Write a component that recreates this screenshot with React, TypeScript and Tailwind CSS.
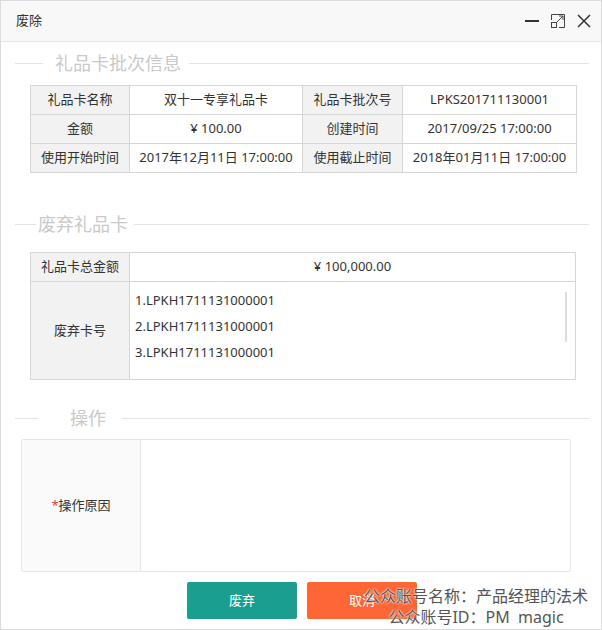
import React from 'react';

const font = { fontFamily: '"Noto Sans", "Noto Sans CJK SC", sans-serif' };

const Legend = ({ title, lead, gap, after }: { title: string; lead: number; gap: string; after: string }) => (
  <div className="flex items-center pl-[14px] pr-[12px] h-[22px]">
    <div className="h-px bg-[#e3e3e3]" style={{ width: lead }} />
    <span className={`${gap} ${after} text-[18px] leading-none text-[#c9c9c9]`}>{title}</span>
    <div className="h-px flex-1 bg-[#e3e3e3]" />
  </div>
);

const App = () => {
  return (
    <div
      className="relative w-[602px] h-[630px] bg-white border border-[#dcdcdc] overflow-hidden text-[13px] text-[#333]"
      style={font}
    >
      {/* header */}
      <div className="h-[41px] bg-[#f8f8f8] border-b border-[#e6e6e6] flex items-center pl-[15px] pr-[10px]">
        <span className="text-[13px] text-[#333]">废除</span>
        <div className="ml-auto flex items-center gap-[12px]">
          <svg width="14" height="14" viewBox="0 0 14 14">
            <rect x="0" y="6" width="14" height="2" fill="#333" />
          </svg>
          <svg width="14" height="14" viewBox="0 0 14 14" fill="none" stroke="#444" strokeWidth="1">
            <path d="M0.5 6V0.5H13.5V13.5H8" />
            <rect x="0.5" y="8.5" width="5" height="5" />
            <path d="M6 8L12 2M8 2H12V6" />
          </svg>
          <svg width="14" height="14" viewBox="0 0 14 14" stroke="#333" strokeWidth="1.5">
            <path d="M1 1L13 13M13 1L1 13" />
          </svg>
        </div>
      </div>

      <div className="mt-[10px]">
        <Legend title="礼品卡批次信息" lead={28} gap="ml-[12px]" after="mr-[8px]" />
      </div>

      <table className="mt-[11px] ml-[29px] w-[546px] border-collapse table-fixed text-center">
        <colgroup>
          <col className="w-[99px]" />
          <col className="w-[173px]" />
          <col className="w-[100px]" />
          <col className="w-[174px]" />
        </colgroup>
        <tbody>
          {[
            ['礼品卡名称', '双十一专享礼品卡', '礼品卡批次号', 'LPKS201711130001'],
            ['金额', '¥ 100.00', '创建时间', '2017/09/25 17:00:00'],
            ['使用开始时间', '2017年12月11日 17:00:00', '使用截止时间', '2018年01月11日 17:00:00'],
          ].map((r) => (
            <tr key={r[0]} className="h-[29px]">
              <td className="border border-[#d6d6d6] bg-[#f2f2f2] p-0">{r[0]}</td>
              <td className="border border-[#d6d6d6] p-0">{r[1]}</td>
              <td className="border border-[#d6d6d6] bg-[#f2f2f2] p-0">{r[2]}</td>
              <td className="border border-[#d6d6d6] p-0">{r[3]}</td>
            </tr>
          ))}
        </tbody>
      </table>

      <div className="mt-[40px]">
        <Legend title="废弃礼品卡" lead={21} gap="ml-[2px]" after="mr-[6px]" />
      </div>

      <table className="mt-[17px] ml-[29px] w-[546px] border-collapse table-fixed">
        <colgroup>
          <col className="w-[99px]" />
          <col />
        </colgroup>
        <tbody>
          <tr className="h-[29px]">
            <td className="border border-[#d6d6d6] bg-[#f2f2f2] p-0 text-center">礼品卡总金额</td>
            <td className="border border-[#d6d6d6] p-0 text-center">¥ 100,000.00</td>
          </tr>
          <tr className="h-[98px]">
            <td className="border border-[#d6d6d6] bg-[#f2f2f2] p-0 text-center">废弃卡号</td>
            <td className="border border-[#d6d6d6] p-0 align-top">
              <div className="flex h-[96px]">
                <div className="flex-1 pl-[5px] pt-[9px] flex flex-col gap-[8px] leading-[18px]">
                  <span>1.LPKH1711131000001</span>
                  <span>2.LPKH1711131000001</span>
                  <span>3.LPKH1711131000001</span>
                </div>
                <div className="w-[2px] h-[50px] mt-[10px] mr-[8px] bg-[#dcdcdc]" />
              </div>
            </td>
          </tr>
        </tbody>
      </table>

      <div className="mt-[27px]">
        <Legend title="操作" lead={23} gap="ml-[32px]" after="mr-[16px]" />
      </div>

      <div className="mt-[10px] ml-[20px] w-[550px] h-[133px] flex border border-[#e6e6e6] rounded-[2px]">
        <div className="w-[119px] bg-[#fafafa] border-r border-[#e6e6e6] flex items-center justify-center">
          <span className="text-[#e4393c]">*</span>
          <span>操作原因</span>
        </div>
        <div className="flex-1" />
      </div>

      <div className="mt-[10px] flex gap-[10px] pl-[186px]">
        <button className="w-[110px] h-[37px] rounded-[2px] bg-[#1a9e8f] text-white text-[13px]">废弃</button>
        <button className="w-[110px] h-[37px] rounded-[2px] bg-[#fe6635] text-white text-[13px]">取消</button>
      </div>

      {/* watermark */}
      <div
        className="absolute right-[13px] bottom-[1px] flex flex-col items-center text-[16px] leading-[21px] text-[#555]"
        style={{ textShadow: '0 0 2px #fff, 0 0 2px #fff' }}
      >
        <span>公众账号名称：产品经理的法术</span>
        <span>公众账号ID：PM&nbsp;&nbsp;magic</span>
      </div>
    </div>
  );
};

export default App;
